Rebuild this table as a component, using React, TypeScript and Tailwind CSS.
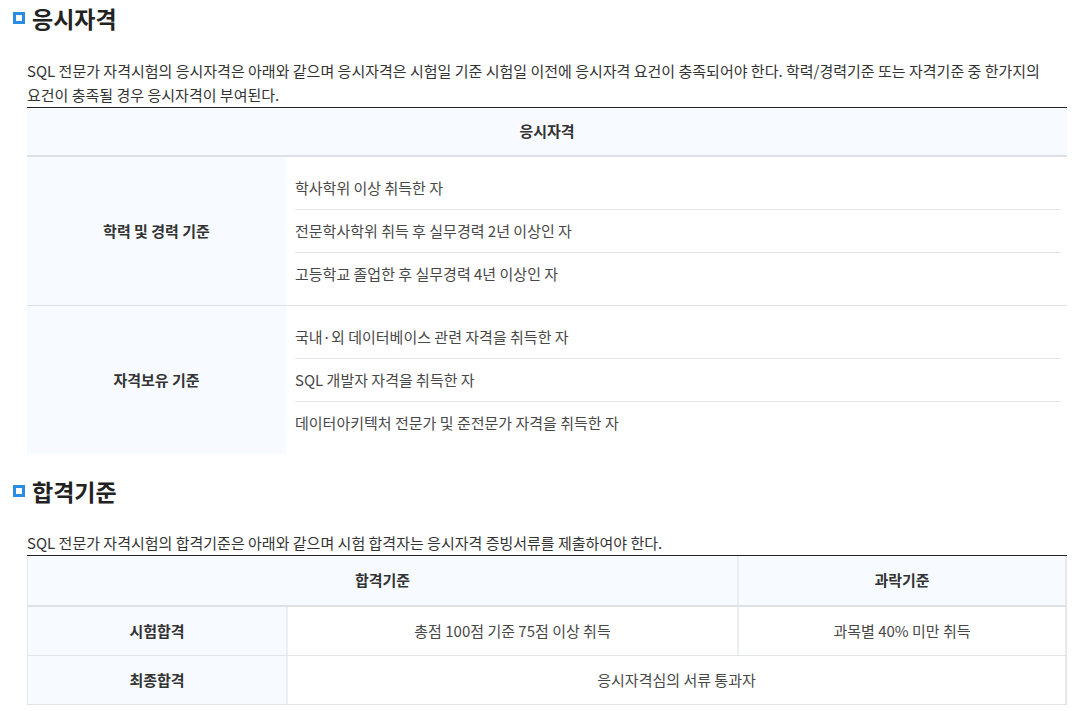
const font = { fontFamily: '"Noto Sans CJK KR", "Noto Sans", sans-serif' }

function SectionTitle({ title }: { title: string }) {
  return (
    <h2 className="flex h-9 items-center pl-[13px] text-[23px] font-bold text-[#222]">
      <span className="mr-[7px] h-3 w-3 border-[3px] border-[#2a8de4] bg-white" />
      {title}
    </h2>
  )
}

interface Group {
  label: string
  items: string[]
}

const groups: Group[] = [
  {
    label: '학력 및 경력 기준',
    items: ['학사학위 이상 취득한 자', '전문학사학위 취득 후 실무경력 2년 이상인 자', '고등학교 졸업한 후 실무경력 4년 이상인 자'],
  },
  {
    label: '자격보유 기준',
    items: ['국내·외 데이터베이스 관련 자격을 취득한 자', 'SQL 개발자 자격을 취득한 자', '데이터아키텍처 전문가 및 준전문가 자격을 취득한 자'],
  },
]

function QualificationTable() {
  return (
    <div className="ml-[27px] w-[1040px] border-t border-[#222] text-[15px]">
      <div className="flex h-[49px] items-center justify-center border-b-2 border-[#dde0e5] bg-[#f7faff] font-bold text-[#333]">
        응시자격
      </div>
      {groups.map((group, gi) => (
        <div key={group.label} className={gi === 0 ? 'flex border-b border-[#dde0e5]' : 'flex'}>
          <div className="flex w-[259px] items-center justify-center bg-[#f7faff] font-bold text-[#333]">
            {group.label}
          </div>
          <div className="flex-1 py-[10px] pl-[9px] pr-[6px]">
            {group.items.map((item, i) => (
              <div
                key={item}
                className={
                  i < group.items.length - 1
                    ? 'flex h-[43px] items-center border-b border-[#e2e4e8] text-[#484848]'
                    : 'flex h-[42px] items-center text-[#484848]'
                }
              >
                {item}
              </div>
            ))}
          </div>
        </div>
      ))}
    </div>
  )
}

function PassTable() {
  return (
    <div className="ml-[27px] w-[1040px] border-t border-[#222] text-[15px]">
      <div className="flex h-[51px] border-b-2 border-[#dde0e5] bg-[#f7faff] font-bold text-[#333]">
        <div className="flex w-[710px] items-center justify-center border-l border-[#e6e8ec]">합격기준</div>
        <div className="flex flex-1 items-center justify-center border-x-2 border-[#eceef1] border-r-[#e6e8ec]">과락기준</div>
      </div>
      <div className="flex h-[49px] border-b border-[#e2e4e8] text-[#484848]">
        <div className="flex w-[259px] items-center justify-center border-l border-[#e6e8ec] bg-[#f7faff] font-bold text-[#333]">
          시험합격
        </div>
        <div className="flex w-[451px] items-center justify-center border-l-2 border-[#eceef1]">
          총점 100점 기준 75점 이상 취득
        </div>
        <div className="flex flex-1 items-center justify-center border-x-2 border-[#eceef1] border-r-[#e6e8ec]">
          과목별 40% 미만 취득
        </div>
      </div>
      <div className="flex h-[49px] border-b border-[#e2e4e8] text-[#484848]">
        <div className="flex w-[259px] items-center justify-center border-l border-[#e6e8ec] bg-[#f7faff] font-bold text-[#333]">
          최종합격
        </div>
        <div className="flex flex-1 items-center justify-center border-x-2 border-[#eceef1] border-r-[#e6e8ec]">
          응시자격심의 서류 통과자
        </div>
      </div>
    </div>
  )
}

export default function App() {
  return (
    <div className="h-[711px] w-[1072px] bg-white" style={font}>
      <SectionTitle title="응시자격" />
      <p className="mt-[23px] break-keep pl-[27px] pr-[6px] text-[15px] leading-6 text-[#333]">
        SQL 전문가 자격시험의 응시자격은 아래와 같으며 응시자격은 시험일 기준 시험일 이전에 응시자격 요건이 충족되어야 한다. 학력/경력기준 또는 자격기준 중 한가지의 요건이 충족될 경우 응시자격이 부여된다.
      </p>
      <QualificationTable />
      <div className="mt-[19px]">
        <SectionTitle title="합격기준" />
      </div>
      <p className="mt-[22px] break-keep pl-[27px] text-[15px] leading-6 text-[#333]">
        SQL 전문가 자격시험의 합격기준은 아래와 같으며 시험 합격자는 응시자격 증빙서류를 제출하여야 한다.
      </p>
      <PassTable />
    </div>
  )
}
